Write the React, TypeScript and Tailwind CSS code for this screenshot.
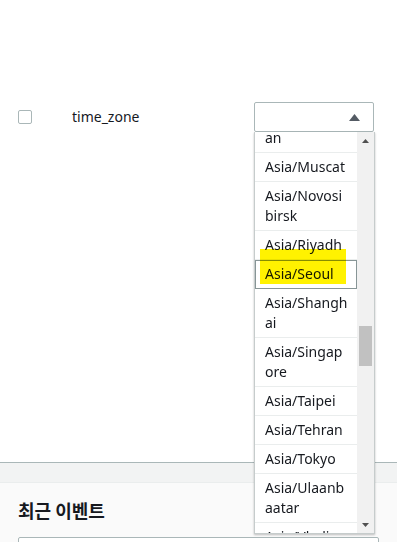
import React, { useEffect, useRef } from 'react';

const zones = [
  'Asia/Magadan',
  'Asia/Muscat',
  'Asia/Novosibirsk',
  'Asia/Riyadh',
  'Asia/Seoul',
  'Asia/Shanghai',
  'Asia/Singapore',
  'Asia/Taipei',
  'Asia/Tehran',
  'Asia/Tokyo',
  'Asia/Ulaanbaatar',
  'Asia/Vladivostok',
  'Asia/Yakutsk',
];

const App = () => {
  const listRef = useRef<HTMLDivElement>(null);

  useEffect(() => {
    if (listRef.current) listRef.current.scrollTop = 28;
  }, []);

  return (
    <div className="w-[397px] h-[542px] overflow-hidden bg-white flex flex-col font-['Noto_Sans',sans-serif] text-[#16191f]">
      <div className="h-[462px] shrink-0 pt-[102px]">
        <div className="flex items-start">
          <div className="w-[254px] h-[30px] flex items-center">
            <span className="ml-[18px] w-[14px] h-[14px] border border-[#aab7b8] rounded-[2px] bg-white" />
            <span className="ml-[40px] text-[14px] leading-[20px]">time_zone</span>
          </div>

          <div className="relative w-[120px]">
            <div className="h-[30px] border border-[#aab7b8] rounded-[2px] bg-white flex items-center justify-end pr-[13px]">
              <svg width="11" height="7" viewBox="0 0 11 7">
                <path d="M5.5 0L11 7H0z" fill="#545b64" />
              </svg>
            </div>

            <div className="absolute z-10 left-0 top-[30px] w-[121px] h-[402px] bg-white border-x border-b border-[#c6cccc] shadow-[0_1px_2px_rgba(0,0,0,0.25)] flex">
              <div ref={listRef} className="w-[102px] h-[401px] overflow-hidden">
                {zones.map((z) => (
                  <div
                    key={z}
                    className={
                      z === 'Asia/Seoul'
                        ? 'pl-[10px] pr-[8px] py-[4px] border-b border-[#eaeded] text-[14px] leading-[20px] break-all outline outline-1 -outline-offset-1 outline-[#879596]'
                        : 'pl-[10px] pr-[8px] py-[4px] border-b border-[#eaeded] text-[14px] leading-[20px] break-all'
                    }
                  >
                    {z}
                  </div>
                ))}
              </div>

              <div className="w-[17px] h-[401px] bg-[#f1f1f1] flex flex-col">
                <div className="h-[17px] flex items-center justify-center">
                  <svg width="7" height="4" viewBox="0 0 7 4">
                    <path d="M3.5 0L7 4H0z" fill="#505050" />
                  </svg>
                </div>
                <div className="mt-[177px] mx-[2px] h-[40px] bg-[#c1c1c1]" />
                <div className="flex-1" />
                <div className="h-[17px] flex items-center justify-center">
                  <svg width="7" height="4" viewBox="0 0 7 4">
                    <path d="M0 0H7L3.5 4z" fill="#505050" />
                  </svg>
                </div>
              </div>

              {/* highlighter mark over the selected zone */}
              <div className="absolute left-[5px] top-[117px] w-[86px] h-[35px] bg-[#fff200] mix-blend-multiply pointer-events-none" />
            </div>
          </div>
        </div>
      </div>

      <div className="h-[21px] shrink-0 border-t border-b border-t-[#aab7b8] border-b-[#eaeded] bg-[#f2f3f3]" />

      <div className="flex-1 bg-[#fafafa] px-[18px] pt-[15px]">
        <h2 className="text-[18px] leading-[24px] font-bold font-['Noto_Sans_CJK_KR',sans-serif]">최근 이벤트</h2>
        <div className="mt-[15px] h-[40px] border border-[#aab7b8] rounded-[2px] bg-white" />
      </div>
    </div>
  );
};

export default App;
